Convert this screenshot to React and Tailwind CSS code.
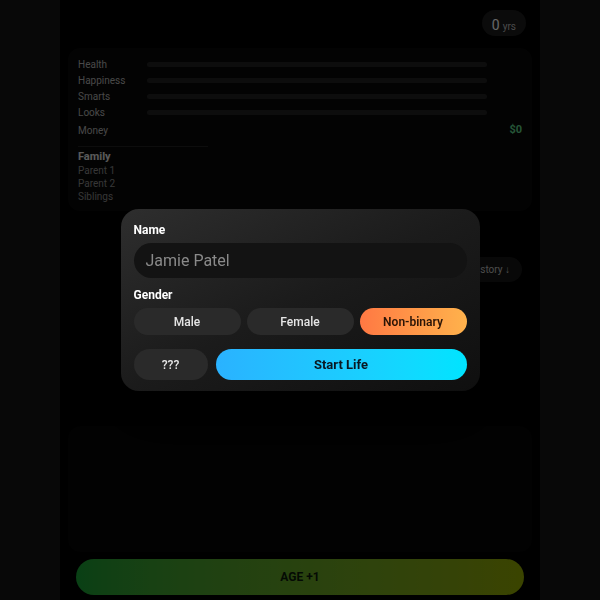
import { useState } from 'react';

const stats = ['Health', 'Happiness', 'Smarts', 'Looks'];
const family = ['Parent 1', 'Parent 2', 'Siblings'];
const genders = ['Male', 'Female', 'Non-binary'];

const font = { fontFamily: 'Roboto, "Noto Sans", sans-serif' };

const NewLifeModal = () => {
  const [name, setName] = useState('');
  const [gender, setGender] = useState('Non-binary');

  return (
    <div className="fixed inset-0 bg-black/60 flex items-center justify-center">
      <div className="w-[359px] rounded-[18px] bg-linear-to-br from-[#2e2e2e] via-[#1b1b1b] to-[#0f0f0f] px-[13px] pt-[14px] pb-[11px] shadow-2xl">
        <p className="text-[12px] leading-[14px] font-bold text-white">Name</p>
        <input
          value={name}
          onChange={e => setName(e.target.value)}
          placeholder="Jamie Patel"
          className="mt-[6px] w-full h-[35px] rounded-full bg-[#131313] px-3 text-[16px] text-white placeholder:text-[#8a8a8a] outline-none"
        />

        <p className="mt-[10px] text-[12px] leading-[14px] font-bold text-white">Gender</p>
        <div className="mt-[6px] grid grid-cols-3 gap-[6px]">
          {genders.map(g => (
            <button
              key={g}
              onClick={() => setGender(g)}
              className={`h-[27px] rounded-full text-[12px] ${
                gender === g
                  ? 'bg-linear-to-r from-[#ff7843] to-[#ffb24c] text-[#2a1406] font-semibold'
                  : 'bg-[#2a2a2a] text-[#e6e6e6] font-medium'
              }`}
            >
              {g}
            </button>
          ))}
        </div>

        <div className="mt-[14px] grid grid-cols-[74px_1fr] gap-2">
          <button className="h-[31px] rounded-full bg-[#2a2a2a] text-[12px] font-medium text-[#e6e6e6]">???</button>
          <button className="h-[31px] rounded-full bg-linear-to-r from-[#2ab2ff] to-[#00e4ff] text-[13px] font-bold text-[#0a1822]">
            Start Life
          </button>
        </div>
      </div>
    </div>
  );
};

export default function App() {
  return (
    <div className="min-h-screen bg-[#151515]" style={font}>
      <div className="max-w-[480px] mx-auto min-h-screen bg-black px-2 pt-[10px] pb-1 flex flex-col">
        {/* header */}
        <div className="flex justify-end pr-[6px]">
          <div className="h-[26px] px-[10px] rounded-full bg-[#1c1c1c] flex items-end pb-[4px] gap-[3px] text-white">
            <span className="text-[14px] leading-none">0</span>
            <span className="text-[10px] leading-none text-[#bbbbbb]">yrs</span>
          </div>
        </div>

        {/* stats */}
        <div className="mt-3 rounded-xl bg-[#090909] px-[10px] pt-2 pb-2">
          {stats.map(s => (
            <div key={s} className="h-4 flex items-center">
              <span className="w-[69px] text-[10px] text-[#b5b5b5]">{s}</span>
              <div className="w-[340px] h-[5px] rounded-full bg-[#222222]" />
            </div>
          ))}
          <div className="mt-[2px] h-4 flex items-center justify-between">
            <span className="text-[10px] text-[#b5b5b5]">Money</span>
            <span className="text-[11px] font-bold text-[#5fd38a]">$0</span>
          </div>
          <div className="mt-2 w-[130px] border-t border-[#222222]" />
          <p className="mt-[3px] text-[11px] leading-[14px] font-bold text-[#e0e0e0]">Family</p>
          {family.map(f => (
            <p key={f} className="text-[10px] leading-[13px] text-[#8a8a8a]">{f}</p>
          ))}
        </div>

        <div className="mt-[46px] flex justify-end pr-[10px]">
          <button className="h-[25px] px-3 rounded-full bg-[#161616] text-[10px] text-[#c4c4c4]">History ↓</button>
        </div>

        {/* life log */}
        <div className="mt-[144px] h-[126px] rounded-xl bg-[#050505]" />

        <div className="mt-[7px] px-2">
          <button className="w-full h-9 rounded-full bg-linear-to-r from-[#17a035] to-[#93aa00] text-[12px] font-bold text-[#0c1a0a]">
            AGE +1
          </button>
        </div>
      </div>

      <NewLifeModal />
    </div>
  );
}
